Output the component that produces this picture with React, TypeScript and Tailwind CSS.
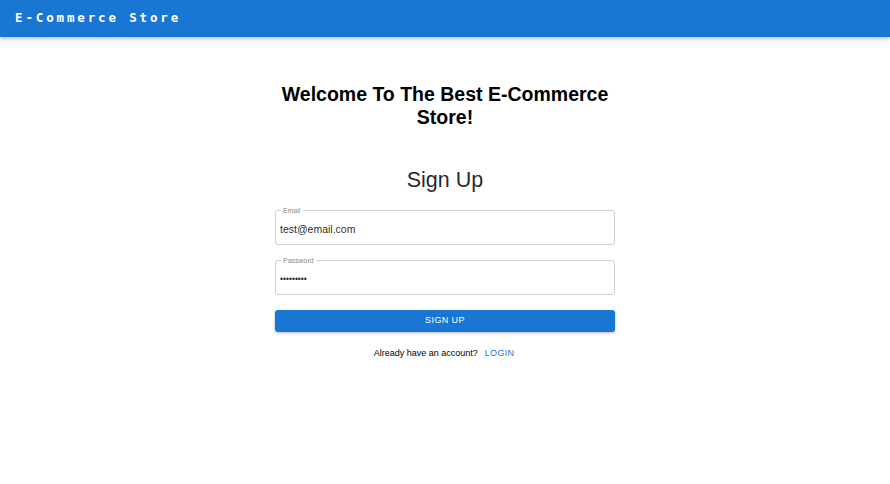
import React from 'react';

function OutlinedField({ label, type, value }: { label: string; type: string; value: string }) {
  return (
    <div className="relative h-[34px] w-full">
      <input
        type={type}
        defaultValue={value}
        className={`h-full w-full bg-transparent px-[5px] pt-[1px] text-[#000000de] outline-none ${
          type === 'password' ? 'text-[8.5px]' : 'text-[10.5px]'
        }`}
      />
      <fieldset className="pointer-events-none absolute inset-0 -top-[5px] m-0 rounded-[3px] border border-[#cfcfcf] px-[5px]">
        <legend className="px-[2px] text-[7px] leading-[9px] text-[#0000008a]">{label}</legend>
      </fieldset>
    </div>
  );
}

export default function App() {
  return (
    <div className="min-h-[484px] bg-white font-['Liberation_Sans',Arial,sans-serif]">
      <header className="flex h-[37px] items-center bg-[#1976d2] px-[15px] shadow-[0_2px_4px_rgba(0,0,0,0.25)]">
        <span className="font-['DejaVu_Sans_Mono',monospace] text-[12.5px] font-bold tracking-[2.85px] text-white">
          E-Commerce Store
        </span>
      </header>

      <main className="mx-auto flex w-[340px] flex-col items-center pt-[46px]">
        <h1 className="text-center text-[19.5px] font-bold leading-[23px] text-black">
          Welcome To The Best E-Commerce Store!
        </h1>

        <h2 className="mt-[38px] text-[21.5px] leading-[26px] text-[#000000de]">Sign Up</h2>

        <div className="mt-[18px] flex w-full flex-col gap-[16px]">
          <OutlinedField label="Email" type="email" value="test@email.com" />
          <OutlinedField label="Password" type="password" value="password1" />
        </div>

        <button className="mt-[15px] h-[22px] w-full rounded-[3px] bg-[#1976d2] text-[9px] tracking-[0.4px] text-white shadow-[0_1px_3px_rgba(0,0,0,0.3)]">
          SIGN UP
        </button>

        <div className="mt-[15px] flex items-center gap-[5px] text-[9px]">
          <span className="text-black">Already have an account?</span>
          <button className="px-[2px] tracking-[0.3px] text-[#1976d2]">LOGIN</button>
        </div>
      </main>
    </div>
  );
}
